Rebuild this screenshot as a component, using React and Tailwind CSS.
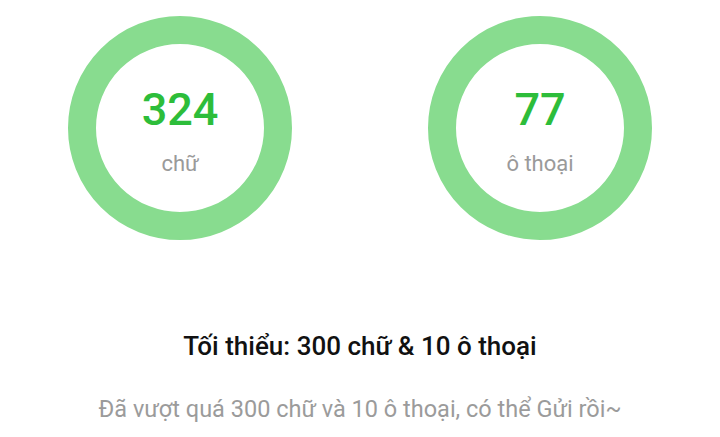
export default function App() {
  const stats = [
    { value: "324", label: "chữ" },
    { value: "77", label: "ô thoại" },
  ];
  return (
    <div
      className="w-[720px] h-[437px] bg-white flex flex-col items-center"
      style={{ fontFamily: "Roboto, 'Noto Sans', sans-serif" }}
    >
      <div className="w-full flex pt-[16px]">
        {stats.map((s) => (
          <div key={s.label} className="flex-1 flex justify-center">
            <div className="w-[224px] h-[224px] rounded-full border-[28px] border-[#88dc8f] flex flex-col items-center justify-center">
              <div className="text-[45px] leading-none font-medium text-[#2dbd3a] mt-[5px]">
                {s.value}
              </div>
              <div className="text-[22px] leading-none text-[#9a9a9a] mt-[21px]">
                {s.label}
              </div>
            </div>
          </div>
        ))}
      </div>
      <div className="mt-[93px] text-[26px] leading-none font-medium text-[#111]">
        Tối thiểu: 300 chữ &amp; 10 ô thoại
      </div>
      <div className="mt-[39px] text-[23.5px] leading-none text-[#9b9b9b]">
        Đã vượt quá 300 chữ và 10 ô thoại, có thể Gửi rồi~
      </div>
    </div>
  );
}
